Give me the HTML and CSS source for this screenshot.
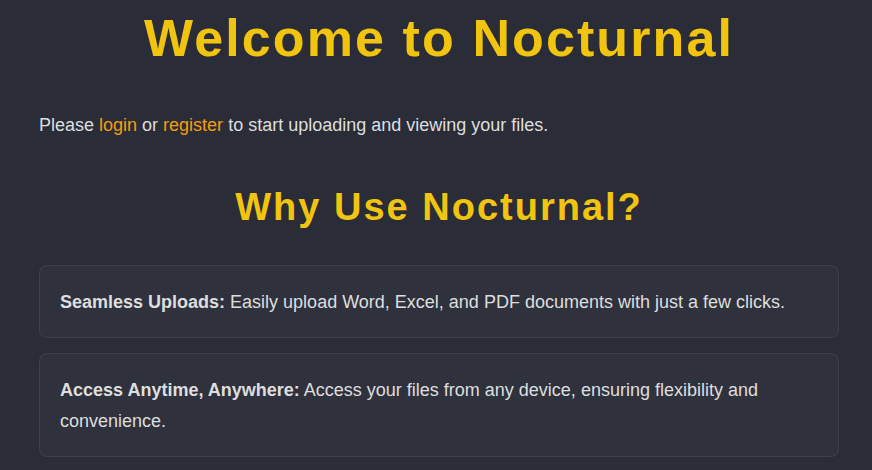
FILE: index.html
```html
<!DOCTYPE html>
<html lang="en">
<head>
<meta charset="utf-8">
<title>Nocturnal</title>
<link rel="stylesheet" href="styles.css">
</head>
<body>
<main class="page">
  <h1 class="title">Welcome to Nocturnal</h1>
  <p class="intro">Please <a href="#" class="link">login</a> or <a href="#" class="link">register</a> to start uploading and viewing your files.</p>
  <h2 class="subtitle">Why Use Nocturnal?</h2>
  <div class="features">
    <div class="card"><strong>Seamless Uploads:</strong> Easily upload Word, Excel, and PDF documents with just a few clicks.</div>
    <div class="card"><strong>Access Anytime, Anywhere:</strong> Access your files from any device, ensuring flexibility and convenience.</div>
  </div>
</main>
</body>
</html>
```
FILE: styles.css
```css
html, body {
  margin: 0;
  padding: 0;
  background: #2a2c38;
}
body {
  font-family: "Liberation Sans", Arial, sans-serif;
  color: #dedede;
}
.page {
  padding: 8px 33px 0 39px;
}
.title {
  margin: 0;
  text-align: center;
  color: #f1c40f;
  font-size: 52px;
  letter-spacing: 2.1px;
  line-height: 60px;
  font-weight: bold;
}
.intro {
  margin: 42px 0 0;
  font-size: 18px;
  line-height: 30px;
}
.link {
  color: #f39c12;
  text-decoration: none;
}
.subtitle {
  margin: 44px 0 0;
  text-align: center;
  color: #f1c40f;
  font-size: 38px;
  letter-spacing: 2px;
  line-height: 46px;
  font-weight: bold;
}
.features {
  margin-top: 35px;
  display: flex;
  flex-direction: column;
  gap: 15px;
}
.card {
  background: #2f323d;
  border: 1px solid #3e414c;
  border-radius: 8px;
  padding: 21px 20px 19px;
  font-size: 18px;
  line-height: 31px;
}
.card strong {
  font-weight: bold;
}
```
